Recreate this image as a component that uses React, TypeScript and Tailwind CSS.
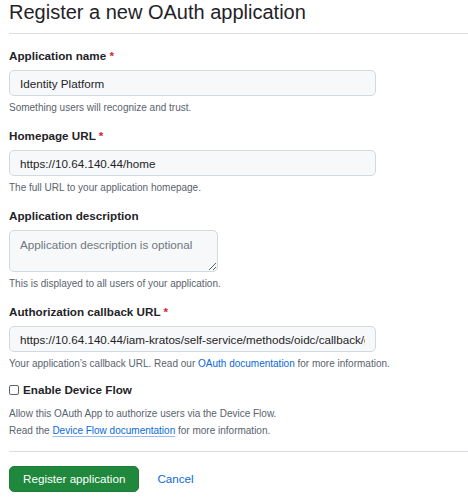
import React from "react";

function Label({ children, required }: { children: React.ReactNode; required?: boolean }) {
  return (
    <label className="block text-[11.67px] leading-[18px] font-bold text-[#1f2328]">
      {children}
      {required && <span className="text-[#d1242f]"> *</span>}
    </label>
  );
}

function Help({ children }: { children: React.ReactNode }) {
  return <p className="mt-[4px] text-[10px] leading-[15px] text-[#59636e]">{children}</p>;
}

const inputCls =
  "block h-[26px] w-[367px] rounded-[5px] border border-[#d1d9e0] bg-[#f6f8fa] px-[10px] text-[11.67px] text-[#1f2328] outline-none font-['Liberation_Sans',Arial,sans-serif]";

export default function App() {
  return (
    <div className="min-h-[498px] bg-white pl-[9px] font-['Liberation_Sans',Arial,sans-serif] text-[#1f2328]">
      <h2 className="border-b border-[#d8dee4] pb-[8px] text-[20px] font-normal leading-[25px] text-[#1f2328]">
        Register a new OAuth application
      </h2>

      <form className="mt-[13px]" onSubmit={(e) => e.preventDefault()}>
        <div>
          <Label required>Application name</Label>
          <input className={`mt-[5px] ${inputCls}`} defaultValue="Identity Platform" />
          <Help>Something users will recognize and trust.</Help>
        </div>

        <div className="mt-[12px]">
          <Label required>Homepage URL</Label>
          <input className={`mt-[5px] ${inputCls}`} defaultValue="https://10.64.140.44/home" />
          <Help>The full URL to your application homepage.</Help>
        </div>

        <div className="mt-[12px]">
          <Label>Application description</Label>
          <textarea
            className="mt-[5px] block h-[42px] w-[209px] rounded-[5px] border border-[#d1d9e0] bg-[#f6f8fa] px-[10px] py-[5px] text-[11.67px] leading-[17.5px] text-[#1f2328] outline-none placeholder:text-[#6e7781] font-['Liberation_Sans',Arial,sans-serif]"
            placeholder="Application description is optional"
          />
          <Help>This is displayed to all users of your application.</Help>
        </div>

        <div className="mt-[12px]">
          <Label required>Authorization callback URL</Label>
          <input
            className={`mt-[5px] ${inputCls}`}
            defaultValue="https://10.64.140.44/iam-kratos/self-service/methods/oidc/callback/github"
          />
          <Help>
            Your application’s callback URL. Read our{" "}
            <a href="#" className="text-[#0969da]">
              OAuth documentation
            </a>{" "}
            for more information.
          </Help>
        </div>

        <div className="mt-[10px]">
          <label className="flex items-center text-[11.67px] leading-[18px] font-bold text-[#1f2328]">
            <span className="mr-[4px] box-border inline-block h-[10px] w-[10px] rounded-[2px] border border-[#59636e] bg-white" />
            Enable Device Flow
          </label>
          <p className="mt-[7px] text-[10px] leading-[15px] text-[#59636e]">
            Allow this OAuth App to authorize users via the Device Flow.
          </p>
          <p className="mt-[2px] text-[10px] leading-[15px] text-[#59636e]">
            Read the{" "}
            <a
              href="#"
              className="text-[#0969da] underline decoration-[#9bbcf0] underline-offset-[2px]"
            >
              Device Flow documentation
            </a>{" "}
            for more information.
          </p>
        </div>

        <div className="mt-[13px] h-px bg-[#d8dee4]" />

        <div className="mt-[14px] flex items-center">
          <button
            type="submit"
            className="h-[26px] rounded-[5px] border border-[#1a7f37] bg-[#1f883d] px-[13px] text-[11.67px] font-normal text-white"
          >
            Register application
          </button>
          <a href="#" className="ml-[18px] text-[11.67px] text-[#0969da]">
            Cancel
          </a>
        </div>
      </form>
    </div>
  );
}
